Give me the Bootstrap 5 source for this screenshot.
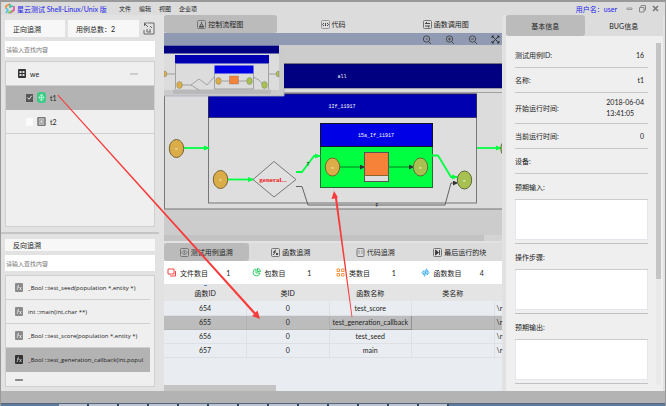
<!DOCTYPE html>
<html lang="zh-CN">
<head>
<meta charset="utf-8">
<meta name="viewport" content="width=device-width, initial-scale=1">
<title>星云测试</title>
<link rel="stylesheet" href="https://cdn.jsdelivr.net/npm/bootstrap@5.3.0/dist/css/bootstrap.min.css">
<style>
body{font:7px/10px Lato,"Noto Sans CJK SC",sans-serif;color:#222;background:#e2e2e2;height:100vh;overflow:hidden}
button,input,textarea{font:inherit;color:inherit;border:0;border-radius:0}
button{padding:0;background:none}
ul{list-style:none;margin:0;padding:0}
svg{display:block;flex:none}
.ico{width:9px;height:9px;fill:none;stroke:#4a4a4a;stroke-width:1}
.app{border-top:2px solid #999;border-left:1px solid #999;border-right:1px solid #999}
.titlebar{height:13px;background:#dcdcdc;padding-left:4px;padding-right:5px}
.brand{width:114px;gap:2px}
.brand,.who{color:#2222e8;white-space:nowrap}
.menus{gap:8px;font-size:6px}
.menus a{color:#222;text-decoration:none}
.work{min-height:0}
.side{flex:0 0 158px;min-width:0;width:158px;padding:5px 4px 4px}
.chip{height:17px;background:#f7f7f7;white-space:nowrap}
.chip.wide{flex:74 1 0;margin-left:3px}
.chip.slim{height:12px;flex:none}
.chip.narrow{flex:59 1 0}
.find{height:16px;flex:none;background:#fff;padding:0 1px;width:100%;outline:0;font-size:6px}
.find::placeholder{color:#777;opacity:1}
.tree{background:#efefef;border:1px solid #d0d0d0;flex:164 1 0}
.tree li{height:24px;border-bottom:1px solid #cfcfcf;white-space:nowrap;overflow:hidden}
.tree li.on{background:#b3b3b3;border-color:#b3b3b3}
.tick{appearance:none;width:7px;height:8px;background:#fafafa;margin:0}
.tick:checked{background:#555 url("data:image/svg+xml,%3Csvg xmlns='http://www.w3.org/2000/svg' viewBox='0 0 8 8'%3E%3Cpath d='M1.5 4l2 2 3-4' fill='none' stroke='white'/%3E%3C/svg%3E") center/7px 7px no-repeat}
.rule2{height:2px;flex:none;background:#c4c4c4;margin:5px -4px}
.funcs{flex:110 1 0;min-height:0;overflow:hidden;padding-right:4px;font:6px/10px "Open Sans",sans-serif}
.funcs li{gap:5px;padding-left:9px}
.funcs li.part{height:9px}
.centre{flex:1 1 0;min-width:0;margin:0 4px 0 5px}
.tabs{height:18px;flex:none;background:#dcdcdc}
.tabs button{flex:1 1 0;gap:2px;display:flex;align-items:center;justify-content:center;white-space:nowrap}
.tabs .on{background:#bbb;border-radius:3px}
.tools{height:12px;flex:none;background:#919ab3;gap:14px;padding:0 2px}
.canvas{flex:1 1 0;min-height:0;background:#ccc;overflow:hidden}
.canvas svg{width:100%;height:100%}
.hbar{height:6px;flex:none;background:#c3c3c3;margin-bottom:2px}
.hbar i{width:18px;background:#d4d4d4}
.stats{height:23px;flex:none;background:#fff}
.stats div{flex:1 1 0;padding-left:3px}
.stats b{font-weight:400;flex:1;text-align:center}
.grid-area{height:107px;flex:none;background:#e9edf1}
.data{width:100%;table-layout:fixed;text-align:center;border-collapse:collapse;white-space:nowrap}
.data th{font-weight:400;height:17px;background:#e4e4e4;padding:0}
.data td{height:14px;padding:0;border-right:1px solid #dde1e5;border-bottom:1px solid #dde1e5}
.data .on td{background:#bcbcbc;border-color:#b2b2b2}
.data .on td.cur{border:1px solid #8f8f8f}
.data th:last-child,.data td:last-child{width:8px;text-align:left;padding-left:2px;border-right:0}
.data .sorted{background:linear-gradient(#5588bb,#5588bb) center 1px/3px 1px no-repeat #e4e4e4}
.grid-thumb{height:6px;width:33%;background:#c4c4c4}
.info{flex:0 0 157px;margin-right:2px}
.info .tabs{height:21px}
.sheet{background:#efefef;padding:7px 2px 6px 9px;gap:8px;overflow:hidden}
.field{border-bottom:1px solid #c6c6c6;height:25px}
.field.tall{height:31px}
.field span:last-child{line-height:11px}
.area label{height:26px;display:flex;align-items:center;border-bottom:1px solid #ccc}
.area{border-bottom:1px solid #c2c2c2;padding-bottom:3px}
.area textarea{display:block;width:100%;height:40px;background:#fff;border:1px solid #e6e6ee;border-top:0;resize:none}
.vbar{width:5px;background:#eaeaea}
.vbar i{height:69%;background:#c4c4c4;width:5px}
.foot{height:12px;flex:none;background:#b3b3b3}
.taskbar{height:3px;flex:none;background:#5c7a9c;border-top:1px solid #56677d;padding-left:58px}
.taskbar i{width:30px;background:#b9c4d0;border-right:2px solid #33475e}
.arrows{position:absolute;inset:0;width:100%;height:100%;pointer-events:none}
.canvas text{font:5px "Liberation Mono",monospace;fill:#fff;text-anchor:middle}
.canvas .tiny{font-size:4px}
.canvas .dark{fill:#111}
.canvas .cond{fill:#e22;font:700 7px "Liberation Serif",serif}
</style>
<script src="https://cdn.jsdelivr.net/npm/bootstrap@5.3.0/dist/js/bootstrap.bundle.min.js"></script>
</head>
<body class="position-relative">
<div class="app d-flex flex-column h-100">
<header class="titlebar d-flex align-items-center flex-shrink-0">
  <div class="brand d-flex align-items-center">
    <svg width="10" height="11" viewBox="0 0 10 11" fill="none" stroke-width="1.6"><path d="M5 1L1 3v3" stroke="#f28a3c"/><path d="M1 5l2 2-2 3" stroke="#4cc9dc"/><path d="M5 1v3l3-1" stroke="#36bfa2"/><path d="M9 3v4L5 10" stroke="#e0529c"/><path d="M3 10l4-2" stroke="#78c850"/></svg>
    <span>星云测试 Shell-Linux/Unix 版</span>
  </div>
  <nav class="menus d-flex"><a href="#">文件</a><a href="#">编辑</a><a href="#">视图</a><a href="#">企业项</a></nav>
  <span class="who ms-auto">用户名：user</span>
  <button class="ms-2" aria-label="最小化"><svg class="ico" viewBox="0 0 9 9"><path d="M2 4h5v1.500H2z" stroke="#999"/></svg></button>
  <button class="ms-1" aria-label="还原"><svg class="ico" viewBox="0 0 9 9"><path d="M3 3V1.500h4.500V6H6M1.500 3.500H6V8H1.500z" stroke="#888"/></svg></button>
  <button class="ms-1" aria-label="关闭"><svg class="ico" viewBox="0 0 9 9"><path d="M2 2l5 5M7 2L2 7" stroke="#777" stroke-width="1.500"/></svg></button>
</header>

<div class="work d-flex flex-grow-1">
  <aside class="side d-flex flex-column">
    <div class="d-flex align-items-center mb-1">
      <button class="chip narrow px-2 text-start">正向追溯</button>
      <div class="chip wide px-2 d-flex align-items-center">用例总数：2</div>
      <button class="ms-1" aria-label="导入"><svg width="12" height="13" viewBox="0 0 12 13" fill="none" stroke="#666"><path d="M5 1h6v11H1V8M1 1l4 4M1.500 4V1h3M7 4l2 2M7 7v3M4 7v3h4"/></svg></button>
    </div>
    <input class="find mb-1" aria-label="查找正向追溯" placeholder="请输入查找内容">
    <ul class="tree">
      <li class="d-flex align-items-center ps-2"><svg class="ms-1" width="8" height="9" viewBox="0 0 8 9"><rect width="8" height="9" rx="1" fill="#333"/><path d="M1.500 2h2v2h-2zM4.500 2h2v2h-2zM1.500 5h2v2h-2zM4.500 5h2v2h-2z" fill="#ddd"/></svg><span class="ms-1 flex-grow-1">we</span><svg class="me-3" width="8" height="2" viewBox="0 0 8 2"><path d="M0 1h8" stroke="#aaa"/></svg></li>
      <li class="on d-flex align-items-center ps-3"><input id="t1" class="tick ms-1" type="checkbox" checked><svg class="mx-1" width="9" height="11" viewBox="0 0 9 11"><rect width="9" height="11" rx="3" fill="#3ecb86"/><path d="M4.500 2v7M2 5.500h5M4.500 2L2 5.500l2.500 3.500L7 5.500z" fill="none" stroke="#b8f5d6" stroke-width=".8"/></svg><label for="t1">t1</label></li>
      <li class="d-flex align-items-center ps-3"><input id="t2" class="tick ms-1" type="checkbox"><svg class="mx-1" width="9" height="9" viewBox="0 0 9 9"><rect x="1" y=".5" width="7" height="8" rx="1" fill="#ccc" stroke="#777" stroke-width="1.500"/><rect x="3" y="3" width="3" height="3" fill="#eee" stroke="#777" stroke-width=".7"/></svg><label for="t2">t2</label></li>
    </ul>
    <div class="rule2"></div>
    <button class="chip slim px-2 text-start mb-1">反向追溯</button>
    <input class="find mb-1" aria-label="查找反向追溯" placeholder="请输入查找内容">
    <ul class="tree funcs">
      <li class="d-flex align-items-center"><svg width="8" height="9" viewBox="0 0 8 9"><rect width="8" height="9" rx="1" fill="#8a8a8a"/><path d="M4 2q-1 0-1 1.500T2 7M2 4h2M4.500 4l2 3M6.500 4l-2 3" stroke="#eee" fill="none" stroke-width=".7"/></svg><span>_Bool ::test_seed(population *,entity *)</span></li>
      <li class="d-flex align-items-center"><svg width="8" height="9" viewBox="0 0 8 9"><rect width="8" height="9" rx="1" fill="#8a8a8a"/><path d="M4 2q-1 0-1 1.500T2 7M2 4h2M4.500 4l2 3M6.500 4l-2 3" stroke="#eee" fill="none" stroke-width=".7"/></svg><span>int ::main(int,char **)</span></li>
      <li class="d-flex align-items-center"><svg width="8" height="9" viewBox="0 0 8 9"><rect width="8" height="9" rx="1" fill="#8a8a8a"/><path d="M4 2q-1 0-1 1.500T2 7M2 4h2M4.500 4l2 3M6.500 4l-2 3" stroke="#eee" fill="none" stroke-width=".7"/></svg><span>_Bool ::test_score(population *,entity *)</span></li>
      <li class="on d-flex align-items-center"><svg width="8" height="9" viewBox="0 0 8 9"><rect width="8" height="9" rx="1" fill="#333"/><path d="M4 2q-1 0-1 1.500T2 7M2 4h2M4.500 4l2 3M6.500 4l-2 3" stroke="#ddd" fill="none" stroke-width=".7"/></svg><span>_Bool ::test_generation_callback(int,popul</span></li>
      <li class="part d-flex align-items-end border-0"><svg width="8" height="3" viewBox="0 0 8 3"><path d="M0 3V1.500Q0 1 1 1h6q1 0 1 .5V3z" fill="#8a8a8a"/></svg></li>
    </ul>
  </aside>

  <main class="centre d-flex flex-column">
    <div class="tabs d-flex">
      <button class="on"><svg class="ico" viewBox="0 0 9 9"><rect x=".5" y=".5" width="8" height="8" rx="1" stroke="#777"/><path d="M4.500 2v1.500M2.500 6.500L4.500 3.500l2 3zM2 7h5"/></svg>控制流程图</button>
      <button><svg class="ico" viewBox="0 0 9 9"><rect x=".5" y=".5" width="8" height="8" rx="1" stroke="#999"/><path d="M3 3L1.500 4.500 3 6M6 3l1.500 1.500L6 6M4.500 3v3"/></svg>代码</button>
      <button><svg class="ico" viewBox="0 0 9 9"><rect x=".5" y=".5" width="8" height="8" rx="1" stroke="#777"/><path d="M2 3.500h5M3.500 2v1.500M2 6h5M5.500 6v1.500"/></svg>函数调用图</button>
    </div>
    <div class="tools d-flex align-items-center justify-content-end">
      <button aria-label="还原大小"><svg class="ico" viewBox="0 0 9 9"><circle cx="4.500" cy="4" r="3.200"/><path d="M6.500 6.500L9 9M4 4h1.500"/></svg></button>
      <button aria-label="放大"><svg class="ico" viewBox="0 0 9 9"><circle cx="4.500" cy="4" r="3.200"/><path d="M6.500 6.500L9 9M3 4h3M4.500 2.500v3"/></svg></button>
      <button aria-label="缩小"><svg class="ico" viewBox="0 0 9 9"><circle cx="4.500" cy="4" r="3.200"/><path d="M6.500 6.500L9 9M3 4h3"/></svg></button>
      <button aria-label="全屏"><svg class="ico" viewBox="0 0 9 9"><path d="M1 3V1h2M6 1h2v2M8 6v2H6M3 8H1V6M1 1l7 7M8 1L1 8" stroke="#333"/></svg></button>
    </div>
    <div class="canvas">
      <svg viewBox="164 44 338 190" preserveAspectRatio="xMinYMin slice" role="img" aria-label="控制流程图">
        <defs>
          <marker id="g" markerUnits="userSpaceOnUse" markerWidth="6" markerHeight="6" refX="5" refY="3" orient="auto"><path d="M0 0.500L6 3 0 5.500z" fill="#00ff40"/></marker>
          <marker id="k" markerUnits="userSpaceOnUse" markerWidth="5" markerHeight="5" refX="4" refY="2.500" orient="auto"><path d="M0 0L5 2.500 0 5z" fill="#333"/></marker>
        </defs>
        <rect x="164.500" y="63" width="345" height="145" fill="#dcdcdc" stroke="#777"/>
        <rect x="164" y="63" width="345" height="24" fill="#000080" stroke="#111140" stroke-width=".6"/>
        <path d="M164 91.500h345" stroke="#777" stroke-width=".6"/>
        <rect x="208.500" y="93" width="268" height="109" fill="#dedede" stroke="#777"/>
        <rect x="208.500" y="93" width="268" height="23.500" fill="#0000b0" stroke="#222244" stroke-width=".7"/>
        <rect x="320.500" y="122.500" width="112" height="64" fill="#00ff40" stroke="#246b34"/>
        <rect x="320.500" y="122.500" width="112" height="23" fill="#0000e6" stroke="#112"/>
        <text x="342" y="77">all</text><text x="342" y="107">1If_11917</text><text x="376" y="136">15a_If_11917</text>
        <g fill="none" stroke="#00ff40" stroke-width="1.800"><path marker-end="url(#g)" d="M184 147h25"/><path marker-end="url(#g)" d="M227 178.500h26"/><path marker-end="url(#g)" d="M296 171h6l12-16h6"/><path marker-end="url(#g)" d="M432 154.500h6l13 21.500h6"/><path marker-end="url(#g)" d="M477 147h24"/></g>
        <g fill="none" stroke="#555" stroke-width=".9"><path marker-end="url(#k)" d="M296 185.500h6l6 18.500h137l6-22h6"/><path marker-end="url(#k)" stroke="#0c6b20" d="M339 166h25"/><path marker-end="url(#k)" stroke="#0c6b20" d="M389 166h24"/></g>
        <text class="dark" x="308" y="165">T</text><text class="dark" x="377" y="206">F</text>
        <path d="M253 178.500L274 160.500 296 178.500 274 196z" fill="#e0e0e0" stroke="#777"/>
        <text class="cond" x="273" y="181">general...</text>
        <g stroke="#77622e"><g fill="#dbad48"><ellipse cx="176.500" cy="147.500" rx="7.200" ry="9"/><ellipse cx="220.500" cy="178.500" rx="7.200" ry="9"/><ellipse cx="332.500" cy="166" rx="7.200" ry="9"/></g><g fill="#a8c050" stroke="#5d6b3a"><ellipse cx="420.500" cy="166" rx="7.200" ry="9"/><ellipse cx="464.500" cy="179" rx="7.200" ry="9"/><ellipse cx="508" cy="147.500" rx="7.200" ry="9"/></g></g>
        <g><text class="tiny" x="176.500" y="149">S</text><text class="tiny" x="220.500" y="180">S</text><text class="tiny" x="332.500" y="168">S</text><text class="tiny" x="420.500" y="168">E</text><text class="tiny" x="464.500" y="181">E</text></g>
        <rect x="364.500" y="151.500" width="24" height="29" fill="#ddd" stroke="#555"/><rect x="365" y="152" width="23" height="22" fill="#f58238"/><path d="M364 174.500h25" stroke="#863"/>
        <!-- overview map -->
        <path d="M164 44h120v51H164z" fill="#dcdcdc"/><path d="M279 44h5v51h-5zM164 89h120v6H164z" fill="#cbcbcb"/><path d="M173 88.500h98v4.500h-98z" fill="#b9b9b9"/>
        <path d="M164 44.500h115v8H164z" fill="#000080"/><path d="M175 54h94v8.500h-94z" fill="#0000b0"/><path d="M214.500 64.500h39v8h-39z" fill="#0000e6"/>
        <path d="M175.500 62v26M268.500 62v26M214.500 72v16h39V72M164 73h11M269 73h8M182 84h9l8-6 8 6 7-8M191 84l8 5M222 80h26M253 76l6 3 5 6" fill="none" stroke="#888" stroke-width=".7"/>
        <g stroke="#777" stroke-width=".4"><path d="M164 70a3 3 0 010 6z" fill="#dbad48"/><ellipse cx="179.500" cy="84" rx="2.800" ry="3.500" fill="#dbad48"/><ellipse cx="218.500" cy="80" rx="2.800" ry="3.500" fill="#dbad48"/><ellipse cx="249.500" cy="80" rx="2.800" ry="3.500" fill="#a8c050"/><ellipse cx="264.500" cy="84" rx="2.800" ry="3.500" fill="#a8c050"/><path d="M279 70a3 3 0 000 6z" fill="#a8c050"/><path d="M229.500 75h9v8h-9z" fill="#f58238"/></g>
        <path d="M164 95h120V88" fill="none" stroke="#a9afc0" stroke-width=".8"/>
      </svg>
    </div>
    <div class="hbar d-flex justify-content-end"><i></i></div>
    <div class="tabs d-flex">
      <button class="on"><svg class="ico" viewBox="0 0 9 9"><rect x=".5" y=".5" width="8" height="8" rx="1" stroke="#777"/><path d="M4.500 2L7 4.500 4.500 7 2 4.500zM4.500 3.500v2" stroke="#777"/></svg>测试用例追溯</button>
      <button><svg class="ico" viewBox="0 0 9 9"><rect x=".5" y=".5" width="8" height="8" rx="1" stroke="#777"/><path d="M5 2q-1.500 0-1.500 2T2 7M2 4h3M5 5l2 2M7 5L5 7"/></svg>函数追溯</button>
      <button><svg class="ico" viewBox="0 0 9 9"><rect x="1" y=".5" width="7" height="8" rx="1" stroke="#777"/><path d="M3 2v4M6 2v4" stroke="#999"/></svg>代码追溯</button>
      <button><svg class="ico" viewBox="0 0 9 9"><rect x=".5" y=".5" width="8" height="8" rx="1" stroke="#777"/><path d="M2.500 2v5l3-2.500zM6.500 2v5" fill="#333"/></svg>最后运行的块</button>
    </div>
    <div class="stats d-flex">
      <div class="d-flex align-items-center"><svg class="ico me-1" viewBox="0 0 9 9" style="stroke:#f04848"><path d="M1 1h6v5H1zM3 8h5.500V3"/></svg>文件数目<b>1</b></div>
      <div class="d-flex align-items-center"><svg class="ico me-1" viewBox="0 0 9 9" style="stroke:#35d068"><path d="M4 1a3.500 3.500 0 104 4H4zM5.500 .5a3 3 0 013 3h-3z"/></svg>包数目<b>1</b></div>
      <div class="d-flex align-items-center"><svg class="ico me-1" viewBox="0 0 9 9" style="stroke:#f59440"><path d="M1 1h2.500v2.500H1zM5.500 1H8v2.500H5.500zM1 5.500h2.500V8H1zM5.500 5.500H8V8H5.500z"/></svg>类数目<b>1</b></div>
      <div class="d-flex align-items-center"><svg class="ico me-1" viewBox="0 0 9 9" style="stroke:#3aaef0"><path d="M3 2.500L1 4.500 3 7zM6 2l2 2.500L6 7zM5.500 .5L3.500 8.500"/></svg>函数数目<b>4</b></div>
    </div>
    <div class="grid-area d-flex flex-column justify-content-between">
      <table class="data">
        <thead><tr><th class="sorted">函数ID</th><th>类ID</th><th>函数名称</th><th>类名称</th><th></th></tr></thead>
        <tbody>
          <tr><td>654</td><td>0</td><td>test_score</td><td></td><td>\r</td></tr>
          <tr class="on"><td>655</td><td>0</td><td class="cur">test_generation_callback</td><td></td><td>\r</td></tr>
          <tr><td>656</td><td>0</td><td>test_seed</td><td></td><td>\r</td></tr>
          <tr><td>657</td><td>0</td><td>main</td><td></td><td>\r</td></tr>
        </tbody>
      </table>
      <div class="grid-thumb"></div>
    </div>
  </main>

  <aside class="info d-flex flex-column">
    <div class="tabs d-flex"><button class="on">基本信息</button><button>BUG信息</button></div>
    <div class="sheet d-flex flex-grow-1">
      <form class="flex-grow-1">
        <div class="field d-flex align-items-center justify-content-between"><span>测试用例ID:</span><span class="me-1">16</span></div>
        <div class="field d-flex align-items-center justify-content-between"><span>名称:</span><span class="me-1">t1</span></div>
        <div class="field tall d-flex align-items-center justify-content-between"><span>开始运行时间:</span><span class="me-1">2018-06-04<br>13:41:05</span></div>
        <div class="field d-flex align-items-center justify-content-between"><span>当前运行时间:</span><span class="me-1">0</span></div>
        <div class="field d-flex align-items-center"><span>设备:</span></div>
        <div class="area"><label for="a1">预期输入:</label><textarea id="a1"></textarea></div>
        <div class="area"><label for="a2">操作步骤:</label><textarea id="a2"></textarea></div>
        <div class="area"><label for="a3">预期输出:</label><textarea id="a3"></textarea></div>
      </form>
      <div class="vbar d-flex"><i></i></div>
    </div>
  </aside>
</div>
<footer class="foot"></footer>
<div class="taskbar d-flex"><i></i><i></i><i></i><i></i><i></i><i></i><i></i><i></i><i></i><i></i><i></i><i></i><i></i></div>
</div>
<svg class="arrows" viewBox="0 0 666 406" preserveAspectRatio="none" fill="#f83c3c"><path d="M58 94.500L255.500 312.500 257.500 310.500 260 319 252 316 254 314.200 57.500 95.500z"/><path d="M352.400 317L337 197.500 338 197.500 334 191 331.500 199 335 198.500 351.600 317z"/></svg>
</body>
</html>
